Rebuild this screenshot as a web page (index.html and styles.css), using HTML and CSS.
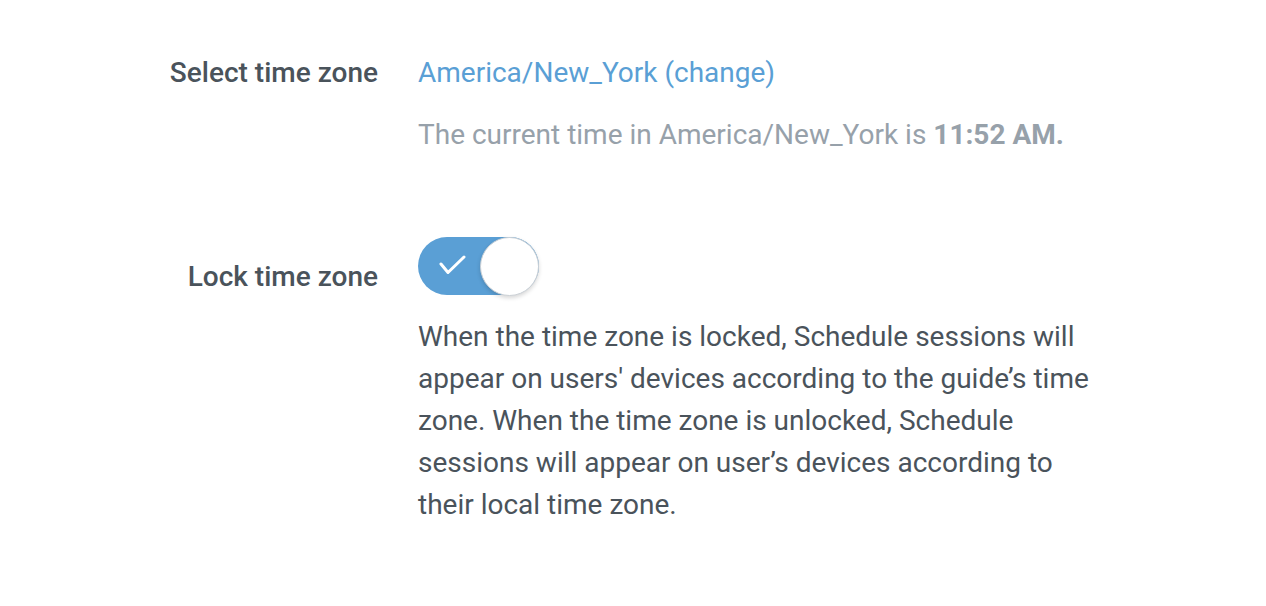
FILE: index.html
```html
<!DOCTYPE html>
<html>
<head>
<meta charset="utf-8">
<link rel="stylesheet" href="styles.css">
</head>
<body>
<div class="settings">
  <div class="row">
    <div class="label">Select time zone</div>
    <div class="value">
      <a class="link" href="#">America/New_York (change)</a>
      <p class="hint">The current time in America/New_York is <strong>11:52 AM.</strong></p>
    </div>
  </div>
  <div class="row row-lock">
    <div class="label label-lock">Lock time zone</div>
    <div class="value">
      <div class="toggle">
        <svg class="check" width="28" height="24" viewBox="0 0 28 24"><path d="M3 11 L10 19.5 L26 4" fill="none" stroke="#fff" stroke-width="3" stroke-linecap="round" stroke-linejoin="round"/></svg>
        <span class="knob"></span>
      </div>
      <p class="desc">When the time zone is locked, Schedule sessions will appear on users' devices according to the guide’s time zone. When the time zone is unlocked, Schedule sessions will appear on user’s devices according to their local time zone.</p>
    </div>
  </div>
</div>
</body>
</html>
```
FILE: styles.css
```css
html, body {
  margin: 0;
  padding: 0;
  background: #ffffff;
}
body {
  font-family: Roboto, "Liberation Sans", sans-serif;
  font-size: 28px;
  line-height: 42px;
  color: #4a535b;
}
.settings {
  padding-top: 52px;
}
.row {
  display: grid;
  grid-template-columns: 378px 680px;
  column-gap: 40px;
  align-items: start;
}
.row-lock {
  margin-top: 81px;
}
.label {
  text-align: right;
  font-weight: 500;
  color: #4a535b;
}
.label-lock {
  padding-top: 19px;
}
.link {
  color: #5a9fd5;
  text-decoration: none;
}
.hint {
  margin: 20px 0 0;
  color: #97a1aa;
}
.hint strong {
  font-weight: 700;
}
.toggle {
  position: relative;
  width: 121px;
  height: 58px;
  border-radius: 29px;
  background: #5a9fd5;
  box-sizing: border-box;
}
.check {
  position: absolute;
  left: 20px;
  top: 16px;
}
.knob {
  position: absolute;
  right: 0;
  top: 0;
  width: 59px;
  height: 59px;
  border-radius: 50%;
  background: #fff;
  box-sizing: border-box;
  border: 1px solid #ccd1d6;
  box-shadow: 0 2px 4px rgba(0,0,0,0.16);
}
.desc {
  margin: 21px 0 0;
  color: #4a535b;
}
```
